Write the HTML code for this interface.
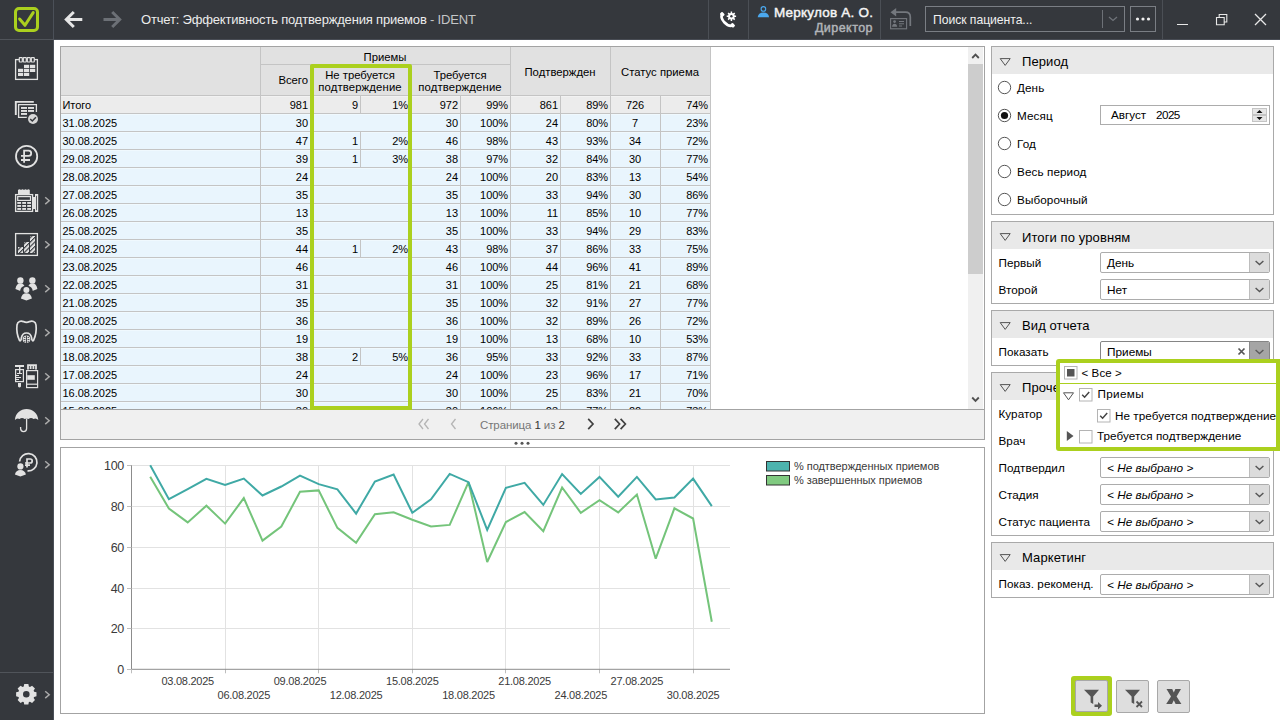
<!DOCTYPE html><html><head><meta charset="utf-8"><title>IDENT</title><style>
*{box-sizing:border-box;margin:0;padding:0}
html,body{width:1280px;height:720px;overflow:hidden}
body{position:relative;background:#fff;font-family:"Liberation Sans",sans-serif;font-size:12px;color:#111}
.a{position:absolute}
.t{position:absolute;white-space:nowrap;line-height:1}
</style></head><body>
<div class="a" style="left:0;top:0;width:54px;height:720px;background:#35383d"></div>
<div class="a" style="left:54px;top:0;width:1226px;height:40px;background:#35383d"></div>
<div class="a" style="left:53px;top:0;width:1px;height:720px;background:#4b5058"></div>
<div class="a" style="left:0;top:39px;width:54px;height:1px;background:#50545a"></div>
<div class="a" style="left:14px;top:7px;width:25px;height:25px;border:3px solid #abd01e;border-radius:5px"></div>
<svg class="a" style="left:14px;top:7px" width="25" height="25"><path d="M5.6 12 L11 18.3 L19.2 5.6" fill="none" stroke="#abd01e" stroke-width="3" stroke-linecap="round" stroke-linejoin="round"/></svg>
<svg class="a" style="left:0;top:0" width="54" height="720"><rect x="15.6" y="59.6" width="21.8" height="19.8" fill="none" stroke="#e2e2e2" stroke-width="1.3"/><rect x="19.3" y="57.6" width="3" height="4.4" rx="0.5" fill="#35383d" stroke="#e2e2e2" stroke-width="1.2"/><rect x="23.3" y="57.6" width="3" height="4.4" rx="0.5" fill="#35383d" stroke="#e2e2e2" stroke-width="1.2"/><rect x="27.3" y="57.6" width="3" height="4.4" rx="0.5" fill="#35383d" stroke="#e2e2e2" stroke-width="1.2"/><rect x="31.3" y="57.6" width="3" height="4.4" rx="0.5" fill="#35383d" stroke="#e2e2e2" stroke-width="1.2"/><rect x="24" y="64.8" width="5.2" height="3.2" fill="#e2e2e2"/><rect x="30" y="64.8" width="5.2" height="3.2" fill="#e2e2e2"/><rect x="18" y="68.8" width="5.2" height="3.2" fill="#e2e2e2"/><rect x="24" y="68.8" width="5.2" height="3.2" fill="#e2e2e2"/><rect x="30" y="68.8" width="5.2" height="3.2" fill="#e2e2e2"/><rect x="18" y="72.8" width="5.2" height="3.2" fill="#e2e2e2"/><rect x="24" y="72.8" width="5.2" height="3.2" fill="#e2e2e2"/><path d="M15.8 115 V101.9 H33.8" fill="none" stroke="#e2e2e2" stroke-width="1.9"/><path d="M29.5 117.4 H18.6 V104.6 H36.4 V112" fill="none" stroke="#e2e2e2" stroke-width="1.3"/><rect x="21" y="107" width="6" height="1.9" fill="#e2e2e2"/><rect x="28" y="107" width="6" height="1.9" fill="#e2e2e2"/><rect x="21" y="110" width="6" height="1.9" fill="#e2e2e2"/><rect x="28" y="110" width="6" height="1.9" fill="#e2e2e2"/><rect x="21" y="113" width="6" height="1.9" fill="#e2e2e2"/><circle cx="33" cy="119" r="6.3" fill="#35383d"/><circle cx="33" cy="119" r="5" fill="#d6d6d6"/><path d="M30.2 119 L32.3 121 L35.9 117.2" fill="none" stroke="#35383d" stroke-width="1.5"/><circle cx="26.6" cy="156.4" r="10.6" fill="none" stroke="#e2e2e2" stroke-width="1.8"/><path d="M24.1 162.7 V150.6 H28.6 A2.6 2.6 0 0 1 28.6 155.8 H21 M21 160 H30" fill="none" stroke="#e2e2e2" stroke-width="1.8"/><path d="M18 194 V190 Q19.5 188.6 21 190 Q22.5 188.6 24 190 Q25.5 188.6 27 190 Q28.5 188.6 29.8 190 V194 Z" fill="#e2e2e2"/><rect x="15.6" y="194.6" width="17" height="16.8" fill="none" stroke="#e2e2e2" stroke-width="1.3"/><rect x="17.7" y="196.6" width="12.8" height="3.8" fill="none" stroke="#e2e2e2" stroke-width="1.2"/><rect x="17.3" y="202" width="3.8" height="1.9" fill="#e2e2e2"/><rect x="22.2" y="202" width="3.8" height="1.9" fill="#e2e2e2"/><rect x="27.2" y="202" width="3.8" height="1.9" fill="#e2e2e2"/><rect x="17.3" y="205" width="3.8" height="1.9" fill="#e2e2e2"/><rect x="22.2" y="205" width="3.8" height="1.9" fill="#e2e2e2"/><rect x="27.2" y="205" width="3.8" height="1.9" fill="#e2e2e2"/><rect x="17.3" y="208" width="3.8" height="1.9" fill="#e2e2e2"/><rect x="22.2" y="208" width="3.8" height="1.9" fill="#e2e2e2"/><rect x="27.2" y="208" width="3.8" height="1.9" fill="#e2e2e2"/><rect x="33" y="197" width="2.6" height="12" fill="#e2e2e2"/><rect x="35.6" y="194.6" width="2" height="16.8" fill="none" stroke="#e2e2e2" stroke-width="1.2"/><rect x="15.6" y="233.6" width="21.8" height="21.8" fill="none" stroke="#e2e2e2" stroke-width="1.3"/><defs><pattern id="hb" patternUnits="userSpaceOnUse" width="3.2" height="3.2" patternTransform="rotate(45)"><rect width="3.2" height="3.2" fill="#e2e2e2"/><rect width="1.1" height="3.2" fill="#35383d"/></pattern></defs><rect x="18" y="247" width="5" height="6" fill="url(#hb)"/><rect x="24" y="242" width="5" height="11" fill="url(#hb)"/><rect x="30" y="236" width="5" height="17" fill="url(#hb)"/><circle cx="20.4" cy="280.4" r="3.2" fill="#e2e2e2"/><path d="M15.399999999999999 289 Q16.4 283.2 20.4 283.2 Q24.4 283.2 25.4 289 L20.4 291 Z" fill="#e2e2e2"/><circle cx="32.4" cy="280.4" r="3.2" fill="#e2e2e2"/><path d="M27.4 289 Q28.4 283.2 32.4 283.2 Q36.4 283.2 37.4 289 L32.4 291 Z" fill="#e2e2e2"/><circle cx="26.4" cy="292" r="6.6" fill="#35383d"/><circle cx="26.4" cy="289.9" r="3.0" fill="#e2e2e2"/><path d="M20.9 298.5 Q21.9 293.2 26.4 293.2 Q30.9 293.2 31.9 298.5 L26.4 300.5 Z" fill="#e2e2e2"/><path d="M19.5 340.5 C17 335 16.5 329 17 325 C17.6 321 21 320.6 23.5 321.6 C25.5 322.6 27.5 322.6 29.5 321.6 C32 320.6 35.6 321 36 325 C36.5 329 36 335 33.5 340.5 C32.5 341.5 31.8 340 31.6 338 C31 334 29 333 26.5 333 C24 333 22 334 21.4 338 C21.2 340 20.5 341.5 19.5 340.5 Z" fill="none" stroke="#e2e2e2" stroke-width="1.7"/><circle cx="26.5" cy="339.2" r="3.8" fill="#e2e2e2"/><path d="M26.5 335.6 V343 M24 337.4 H25.4 M27.6 337.4 H29 M23.6 339.6 H25.4 M27.6 339.6 H29.4 M24 341.8 H25.4 M27.6 341.8 H29" stroke="#35383d" stroke-width="0.9"/><rect x="15" y="365" width="9" height="2" fill="#e2e2e2"/><rect x="19" y="367" width="1.4" height="6" fill="#e2e2e2"/><rect x="15.6" y="369.6" width="7.8" height="12" fill="none" stroke="#e2e2e2" stroke-width="1.2"/><path d="M17 373.5 H22 M16 375.5 H19 M16 377.5 H21 M16 379.5 H19" stroke="#e2e2e2" stroke-width="1"/><path d="M18 383 H21 V386.5 Q19.5 388.5 18 386.5 Z" fill="#e2e2e2"/><path d="M28 369.5 V365.2 H36 V369.5 M30.6 365.6 V369 M33.4 365.6 V369" fill="none" stroke="#e2e2e2" stroke-width="1.8"/><rect x="26.6" y="370.6" width="11" height="17" fill="none" stroke="#e2e2e2" stroke-width="1.2"/><rect x="27.2" y="375.2" width="7.6" height="4.6" fill="#e2e2e2"/><path d="M26.6 384.2 H37.6" stroke="#e2e2e2" stroke-width="1.2"/><path d="M14.9 420 C15.5 413 20.5 409 26.6 409 C32.7 409 37.7 413 38.3 420 Q36 417.5 33.5 419 Q31 417 28.5 419 Q26.6 417.8 24.6 419 Q22 417 19.5 419 Q17 417.5 14.9 420 Z" fill="#e2e2e2"/><path d="M26.6 418.5 V428.6 A3 3 0 0 1 20.6 428.6 V427" fill="none" stroke="#e2e2e2" stroke-width="1.3"/><path d="M19.6 461.5 A8.7 8.7 0 1 1 27.5 470.9" fill="none" stroke="#e2e2e2" stroke-width="1.7"/><path d="M27 467.5 V459 H30.2 A2 2 0 0 1 30.2 463 H25 M25 465.2 H30" fill="none" stroke="#e2e2e2" stroke-width="1.7"/><circle cx="20.4" cy="466.4" r="3.1" fill="#e2e2e2"/><path d="M14.899999999999999 474.5 Q15.899999999999999 470 20.4 470 Q24.9 470 25.9 474.5 L20.4 476.5 Z" fill="#e2e2e2"/><path d="M45.2 197.29999999999998 L49.2 200.7 L45.2 204.1" fill="none" stroke="#a9a9a9" stroke-width="1.5"/><path d="M45.2 241.29999999999998 L49.2 244.7 L45.2 248.1" fill="none" stroke="#a9a9a9" stroke-width="1.5"/><path d="M45.2 285.3 L49.2 288.7 L45.2 292.09999999999997" fill="none" stroke="#a9a9a9" stroke-width="1.5"/><path d="M45.2 329.3 L49.2 332.7 L45.2 336.09999999999997" fill="none" stroke="#a9a9a9" stroke-width="1.5"/><path d="M45.2 373.3 L49.2 376.7 L45.2 380.09999999999997" fill="none" stroke="#a9a9a9" stroke-width="1.5"/><path d="M45.2 417.3 L49.2 420.7 L45.2 424.09999999999997" fill="none" stroke="#a9a9a9" stroke-width="1.5"/><path d="M45.2 461.3 L49.2 464.7 L45.2 468.09999999999997" fill="none" stroke="#a9a9a9" stroke-width="1.5"/><path d="M45.2 691.3000000000001 L49.2 694.7 L45.2 698.1" fill="none" stroke="#a9a9a9" stroke-width="1.5"/><rect x="0" y="672" width="53" height="1" fill="#50545a"/><path d="M24.23 684.11 L28.37 684.11 L28.88 686.52 L29.98 686.97 L32.05 685.63 L34.97 688.55 L33.63 690.62 L34.08 691.72 L36.49 692.23 L36.49 696.37 L34.08 696.88 L33.63 697.98 L34.97 700.05 L32.05 702.97 L29.98 701.63 L28.88 702.08 L28.37 704.49 L24.23 704.49 L23.72 702.08 L22.62 701.63 L20.55 702.97 L17.63 700.05 L18.97 697.98 L18.52 696.88 L16.11 696.37 L16.11 692.23 L18.52 691.72 L18.97 690.62 L17.63 688.55 L20.55 685.63 L22.62 686.97 L23.72 686.52 Z M29.6 694.3 A3.3 3.3 0 1 0 23.0 694.3 A3.3 3.3 0 1 0 29.6 694.3 Z" fill="#e2e2e2" fill-rule="evenodd"/></svg>
<svg class="a" style="left:60px;top:6px" width="70" height="28"><path d="M6.5 13.5 H22.3 M13.8 6 L6.3 13.5 L13.8 21" fill="none" stroke="#e6e6e6" stroke-width="3" stroke-linejoin="miter"/><path d="M43.5 13.5 H59.5 M52.2 6 L59.7 13.5 L52.2 21" fill="none" stroke="#6c7076" stroke-width="3"/></svg>
<div class="t" style="left:141px;top:13px;font-size:13px;color:#ececec;letter-spacing:-0.18px">Отчет: Эффективность подтверждения приемов<span style="color:#c4c6c8"> - IDENT</span></div>
<div class="a" style="left:708px;top:0;width:1px;height:40px;background:#4b4f55"></div>
<div class="a" style="left:748px;top:0;width:1px;height:40px;background:#4b4f55"></div>
<div class="a" style="left:880px;top:0;width:1px;height:40px;background:#4b4f55"></div>
<div class="a" style="left:1162px;top:0;width:1px;height:40px;background:#4b4f55"></div>
<svg class="a" style="left:716px;top:8px" width="26" height="24"><path d="M6.2 6.2 Q4.2 9.6 8 14 Q12.4 18.8 16.6 17.6" fill="none" stroke="#fff" stroke-width="2.6" stroke-linecap="round"/><rect x="4.2" y="4.6" width="4.2" height="3.4" rx="1" transform="rotate(45 6.3 6.3)" fill="#fff"/><rect x="14.6" y="15.6" width="4.2" height="3.4" rx="1" transform="rotate(45 16.7 17.3)" fill="#fff"/><circle cx="15.4" cy="8.3" r="3.3" fill="#fff"/><path d="M15.4 3.6 V13 M10.7 8.3 H20.1 M12.1 5 L18.7 11.6 M18.7 5 L12.1 11.6" stroke="#fff" stroke-width="1.5"/><circle cx="15.4" cy="8.3" r="1.2" fill="#35383d"/></svg>
<svg class="a" style="left:755px;top:4px" width="17" height="16"><circle cx="8.4" cy="4.9" r="2.3" fill="none" stroke="#4ba8ee" stroke-width="1.1"/><path d="M2.7 13.2 Q3.2 8.6 8.4 8.4 Q13.6 8.6 14.1 13.2 Z" fill="#4ba8ee"/></svg>
<div class="t" style="left:774px;top:6px;width:99px;text-align:right;font-size:13.5px;color:#f4f4f4;-webkit-text-stroke:0.45px #f4f4f4;letter-spacing:0.22px">Меркулов А. О.</div>
<div class="t" style="left:773px;top:22px;width:100px;text-align:right;font-size:12.5px;color:#b1b4b8;-webkit-text-stroke:0.45px #b1b4b8;letter-spacing:0.45px">Директор</div>
<svg class="a" style="left:886px;top:6px" width="28" height="26"><path d="M9 6.2 H19.5 Q24.3 6.2 24.3 11 V20" fill="none" stroke="#74787e" stroke-width="1.7"/><path d="M4.5 6.2 L10.2 2 V10.4 Z" fill="#74787e"/><rect x="4.6" y="12.6" width="16" height="10.2" fill="none" stroke="#74787e" stroke-width="1.1"/><circle cx="8.6" cy="15.6" r="1.4" fill="#74787e"/><path d="M6 20.8 Q6.4 17.8 8.6 17.8 Q10.8 17.8 11.2 20.8 Z" fill="#74787e"/><path d="M13 15.5 H18 M13 17.8 H18 M13 20 H16" stroke="#74787e" stroke-width="1"/></svg>
<div class="a" style="left:925px;top:6px;width:200px;height:26px;border:1px solid #7a7e84"></div>
<div class="t" style="left:933px;top:14px;font-size:12.2px;color:#f0f0f0;letter-spacing:-0.05px">Поиск пациента...</div>
<div class="a" style="left:1102px;top:10px;width:1px;height:18px;background:#6d7177"></div>
<svg class="a" style="left:1107px;top:14px" width="12" height="10"><path d="M2 3 L6 6.5 L10 3" fill="none" stroke="#6f7379" stroke-width="1.3"/></svg>
<div class="a" style="left:1130px;top:6px;width:26px;height:26px;border:1px solid #7a7e84"></div>
<svg class="a" style="left:1130px;top:6px" width="26" height="26"><circle cx="7.5" cy="13" r="1.6" fill="#f0f0f0"/><circle cx="13" cy="13" r="1.6" fill="#f0f0f0"/><circle cx="18.5" cy="13" r="1.6" fill="#f0f0f0"/></svg>
<div class="a" style="left:1177px;top:24px;width:11px;height:1px;background:#e8e8e8"></div>
<svg class="a" style="left:1210px;top:8px" width="22" height="22"><path d="M6.5 9.5 H14.2 V16.8 H6.5 Z M9.2 9.2 V6.5 H16.8 V14 H14.4" fill="none" stroke="#e8e8e8" stroke-width="1.1"/></svg>
<svg class="a" style="left:1250px;top:8px" width="22" height="22"><path d="M5 6 L16 17 M16 6 L5 17" fill="none" stroke="#e8e8e8" stroke-width="1.3"/></svg>
<div class="a" style="left:54px;top:39px;width:1226px;height:1px;background:#484c54"></div>
<div class="a" style="left:60px;top:46px;width:925px;height:394px;border:1px solid #a3a3a3;background:#fff"></div>
<div class="a" style="left:61px;top:47px;width:649px;height:48px;background:#e1e1e1"></div>
<div class="a" style="left:61px;top:96px;width:649px;height:17px;background:#ececec"></div>
<div class="a" style="left:61px;top:113px;width:649px;height:296px;background:#e9f5fd"></div>
<div class="a" style="left:260px;top:64px;width:250px;height:1px;background:#c4c4c4"></div>
<div class="a" style="left:61px;top:95px;width:649px;height:1px;background:#c4c4c4"></div>
<div class="a" style="left:61px;top:113px;width:649px;height:1px;background:#c4c4c4"></div>
<div class="a" style="left:61px;top:114px;width:649px;height:1px;background:#f0f9fe"></div>
<div class="a" style="left:61px;top:131px;width:649px;height:1px;background:#c4c4c4"></div>
<div class="a" style="left:61px;top:132px;width:649px;height:1px;background:#f0f9fe"></div>
<div class="a" style="left:61px;top:149px;width:649px;height:1px;background:#c4c4c4"></div>
<div class="a" style="left:61px;top:150px;width:649px;height:1px;background:#f0f9fe"></div>
<div class="a" style="left:61px;top:167px;width:649px;height:1px;background:#c4c4c4"></div>
<div class="a" style="left:61px;top:168px;width:649px;height:1px;background:#f0f9fe"></div>
<div class="a" style="left:61px;top:185px;width:649px;height:1px;background:#c4c4c4"></div>
<div class="a" style="left:61px;top:186px;width:649px;height:1px;background:#f0f9fe"></div>
<div class="a" style="left:61px;top:203px;width:649px;height:1px;background:#c4c4c4"></div>
<div class="a" style="left:61px;top:204px;width:649px;height:1px;background:#f0f9fe"></div>
<div class="a" style="left:61px;top:221px;width:649px;height:1px;background:#c4c4c4"></div>
<div class="a" style="left:61px;top:222px;width:649px;height:1px;background:#f0f9fe"></div>
<div class="a" style="left:61px;top:239px;width:649px;height:1px;background:#c4c4c4"></div>
<div class="a" style="left:61px;top:240px;width:649px;height:1px;background:#f0f9fe"></div>
<div class="a" style="left:61px;top:257px;width:649px;height:1px;background:#c4c4c4"></div>
<div class="a" style="left:61px;top:258px;width:649px;height:1px;background:#f0f9fe"></div>
<div class="a" style="left:61px;top:275px;width:649px;height:1px;background:#c4c4c4"></div>
<div class="a" style="left:61px;top:276px;width:649px;height:1px;background:#f0f9fe"></div>
<div class="a" style="left:61px;top:293px;width:649px;height:1px;background:#c4c4c4"></div>
<div class="a" style="left:61px;top:294px;width:649px;height:1px;background:#f0f9fe"></div>
<div class="a" style="left:61px;top:311px;width:649px;height:1px;background:#c4c4c4"></div>
<div class="a" style="left:61px;top:312px;width:649px;height:1px;background:#f0f9fe"></div>
<div class="a" style="left:61px;top:329px;width:649px;height:1px;background:#c4c4c4"></div>
<div class="a" style="left:61px;top:330px;width:649px;height:1px;background:#f0f9fe"></div>
<div class="a" style="left:61px;top:347px;width:649px;height:1px;background:#c4c4c4"></div>
<div class="a" style="left:61px;top:348px;width:649px;height:1px;background:#f0f9fe"></div>
<div class="a" style="left:61px;top:365px;width:649px;height:1px;background:#c4c4c4"></div>
<div class="a" style="left:61px;top:366px;width:649px;height:1px;background:#f0f9fe"></div>
<div class="a" style="left:61px;top:383px;width:649px;height:1px;background:#c4c4c4"></div>
<div class="a" style="left:61px;top:384px;width:649px;height:1px;background:#f0f9fe"></div>
<div class="a" style="left:61px;top:401px;width:649px;height:1px;background:#c4c4c4"></div>
<div class="a" style="left:61px;top:402px;width:649px;height:1px;background:#f0f9fe"></div>
<div class="a" style="left:61px;top:96px;width:649px;height:1px;background:#f2f2f2"></div>
<div class="a" style="left:260px;top:47px;width:1px;height:362px;background:#c4c4c4"></div>
<div class="a" style="left:310px;top:64px;width:1px;height:345px;background:#c4c4c4"></div>
<div class="a" style="left:410px;top:64px;width:1px;height:345px;background:#c4c4c4"></div>
<div class="a" style="left:510px;top:47px;width:1px;height:362px;background:#c4c4c4"></div>
<div class="a" style="left:610px;top:47px;width:1px;height:362px;background:#c4c4c4"></div>
<div class="a" style="left:460px;top:95px;width:1px;height:314px;background:#c4c4c4"></div>
<div class="a" style="left:560px;top:95px;width:1px;height:314px;background:#c4c4c4"></div>
<div class="a" style="left:660px;top:95px;width:1px;height:314px;background:#c4c4c4"></div>
<div class="a" style="left:710px;top:47px;width:1px;height:362px;background:#c4c4c4"></div>
<div class="a" style="left:360px;top:95px;width:1px;height:18px;background:#c4c4c4"></div>
<div class="a" style="left:360px;top:131px;width:1px;height:18px;background:#c4c4c4"></div>
<div class="a" style="left:360px;top:149px;width:1px;height:18px;background:#c4c4c4"></div>
<div class="a" style="left:360px;top:239px;width:1px;height:18px;background:#c4c4c4"></div>
<div class="a" style="left:360px;top:347px;width:1px;height:18px;background:#c4c4c4"></div>
<div class="t" style="top:52px;font-size:11.3px;color:#000;left:260px;width:250px;text-align:center;">Приемы</div>
<div class="t" style="top:75px;font-size:11.3px;color:#000;left:260px;width:48px;text-align:right;">Всего</div>
<div class="t" style="top:70px;font-size:11.3px;color:#000;left:310px;width:100px;text-align:center;">Не требуется</div>
<div class="t" style="top:82px;font-size:11.3px;color:#000;letter-spacing:0.15px;left:310px;width:100px;text-align:center;">подтверждение</div>
<div class="t" style="top:70px;font-size:11.3px;color:#000;left:410px;width:100px;text-align:center;">Требуется</div>
<div class="t" style="top:82px;font-size:11.3px;color:#000;letter-spacing:0.15px;left:410px;width:100px;text-align:center;">подтверждение</div>
<div class="t" style="top:67px;font-size:11.3px;color:#000;left:510px;width:100px;text-align:center;">Подтвержден</div>
<div class="t" style="top:67px;font-size:11.3px;color:#000;left:610px;width:100px;text-align:center;">Статус приема</div>
<div class="t" style="top:100px;font-size:11px;color:#000;letter-spacing:-0.05px;left:62.5px;">Итого</div>
<div class="t" style="top:100px;font-size:11px;color:#000;letter-spacing:-0.05px;left:260px;width:48px;text-align:right;">981</div>
<div class="t" style="top:100px;font-size:11px;color:#000;letter-spacing:-0.05px;left:310px;width:48px;text-align:right;">9</div>
<div class="t" style="top:100px;font-size:11px;color:#000;letter-spacing:-0.05px;left:360px;width:48px;text-align:right;">1%</div>
<div class="t" style="top:100px;font-size:11px;color:#000;letter-spacing:-0.05px;left:410px;width:48px;text-align:right;">972</div>
<div class="t" style="top:100px;font-size:11px;color:#000;letter-spacing:-0.05px;left:460px;width:48px;text-align:right;">99%</div>
<div class="t" style="top:100px;font-size:11px;color:#000;letter-spacing:-0.05px;left:510px;width:48px;text-align:right;">861</div>
<div class="t" style="top:100px;font-size:11px;color:#000;letter-spacing:-0.05px;left:560px;width:48px;text-align:right;">89%</div>
<div class="t" style="top:100px;font-size:11px;color:#000;letter-spacing:-0.05px;left:610px;width:50px;text-align:center;">726</div>
<div class="t" style="top:100px;font-size:11px;color:#000;letter-spacing:-0.05px;left:660px;width:48px;text-align:right;">74%</div>
<div class="t" style="top:118px;font-size:11px;color:#000;letter-spacing:-0.05px;left:62.5px;">31.08.2025</div>
<div class="t" style="top:118px;font-size:11px;color:#000;letter-spacing:-0.05px;left:260px;width:48px;text-align:right;">30</div>
<div class="t" style="top:118px;font-size:11px;color:#000;letter-spacing:-0.05px;left:410px;width:48px;text-align:right;">30</div>
<div class="t" style="top:118px;font-size:11px;color:#000;letter-spacing:-0.05px;left:460px;width:48px;text-align:right;">100%</div>
<div class="t" style="top:118px;font-size:11px;color:#000;letter-spacing:-0.05px;left:510px;width:48px;text-align:right;">24</div>
<div class="t" style="top:118px;font-size:11px;color:#000;letter-spacing:-0.05px;left:560px;width:48px;text-align:right;">80%</div>
<div class="t" style="top:118px;font-size:11px;color:#000;letter-spacing:-0.05px;left:610px;width:50px;text-align:center;">7</div>
<div class="t" style="top:118px;font-size:11px;color:#000;letter-spacing:-0.05px;left:660px;width:48px;text-align:right;">23%</div>
<div class="t" style="top:136px;font-size:11px;color:#000;letter-spacing:-0.05px;left:62.5px;">30.08.2025</div>
<div class="t" style="top:136px;font-size:11px;color:#000;letter-spacing:-0.05px;left:260px;width:48px;text-align:right;">47</div>
<div class="t" style="top:136px;font-size:11px;color:#000;letter-spacing:-0.05px;left:310px;width:48px;text-align:right;">1</div>
<div class="t" style="top:136px;font-size:11px;color:#000;letter-spacing:-0.05px;left:360px;width:48px;text-align:right;">2%</div>
<div class="t" style="top:136px;font-size:11px;color:#000;letter-spacing:-0.05px;left:410px;width:48px;text-align:right;">46</div>
<div class="t" style="top:136px;font-size:11px;color:#000;letter-spacing:-0.05px;left:460px;width:48px;text-align:right;">98%</div>
<div class="t" style="top:136px;font-size:11px;color:#000;letter-spacing:-0.05px;left:510px;width:48px;text-align:right;">43</div>
<div class="t" style="top:136px;font-size:11px;color:#000;letter-spacing:-0.05px;left:560px;width:48px;text-align:right;">93%</div>
<div class="t" style="top:136px;font-size:11px;color:#000;letter-spacing:-0.05px;left:610px;width:50px;text-align:center;">34</div>
<div class="t" style="top:136px;font-size:11px;color:#000;letter-spacing:-0.05px;left:660px;width:48px;text-align:right;">72%</div>
<div class="t" style="top:154px;font-size:11px;color:#000;letter-spacing:-0.05px;left:62.5px;">29.08.2025</div>
<div class="t" style="top:154px;font-size:11px;color:#000;letter-spacing:-0.05px;left:260px;width:48px;text-align:right;">39</div>
<div class="t" style="top:154px;font-size:11px;color:#000;letter-spacing:-0.05px;left:310px;width:48px;text-align:right;">1</div>
<div class="t" style="top:154px;font-size:11px;color:#000;letter-spacing:-0.05px;left:360px;width:48px;text-align:right;">3%</div>
<div class="t" style="top:154px;font-size:11px;color:#000;letter-spacing:-0.05px;left:410px;width:48px;text-align:right;">38</div>
<div class="t" style="top:154px;font-size:11px;color:#000;letter-spacing:-0.05px;left:460px;width:48px;text-align:right;">97%</div>
<div class="t" style="top:154px;font-size:11px;color:#000;letter-spacing:-0.05px;left:510px;width:48px;text-align:right;">32</div>
<div class="t" style="top:154px;font-size:11px;color:#000;letter-spacing:-0.05px;left:560px;width:48px;text-align:right;">84%</div>
<div class="t" style="top:154px;font-size:11px;color:#000;letter-spacing:-0.05px;left:610px;width:50px;text-align:center;">30</div>
<div class="t" style="top:154px;font-size:11px;color:#000;letter-spacing:-0.05px;left:660px;width:48px;text-align:right;">77%</div>
<div class="t" style="top:172px;font-size:11px;color:#000;letter-spacing:-0.05px;left:62.5px;">28.08.2025</div>
<div class="t" style="top:172px;font-size:11px;color:#000;letter-spacing:-0.05px;left:260px;width:48px;text-align:right;">24</div>
<div class="t" style="top:172px;font-size:11px;color:#000;letter-spacing:-0.05px;left:410px;width:48px;text-align:right;">24</div>
<div class="t" style="top:172px;font-size:11px;color:#000;letter-spacing:-0.05px;left:460px;width:48px;text-align:right;">100%</div>
<div class="t" style="top:172px;font-size:11px;color:#000;letter-spacing:-0.05px;left:510px;width:48px;text-align:right;">20</div>
<div class="t" style="top:172px;font-size:11px;color:#000;letter-spacing:-0.05px;left:560px;width:48px;text-align:right;">83%</div>
<div class="t" style="top:172px;font-size:11px;color:#000;letter-spacing:-0.05px;left:610px;width:50px;text-align:center;">13</div>
<div class="t" style="top:172px;font-size:11px;color:#000;letter-spacing:-0.05px;left:660px;width:48px;text-align:right;">54%</div>
<div class="t" style="top:190px;font-size:11px;color:#000;letter-spacing:-0.05px;left:62.5px;">27.08.2025</div>
<div class="t" style="top:190px;font-size:11px;color:#000;letter-spacing:-0.05px;left:260px;width:48px;text-align:right;">35</div>
<div class="t" style="top:190px;font-size:11px;color:#000;letter-spacing:-0.05px;left:410px;width:48px;text-align:right;">35</div>
<div class="t" style="top:190px;font-size:11px;color:#000;letter-spacing:-0.05px;left:460px;width:48px;text-align:right;">100%</div>
<div class="t" style="top:190px;font-size:11px;color:#000;letter-spacing:-0.05px;left:510px;width:48px;text-align:right;">33</div>
<div class="t" style="top:190px;font-size:11px;color:#000;letter-spacing:-0.05px;left:560px;width:48px;text-align:right;">94%</div>
<div class="t" style="top:190px;font-size:11px;color:#000;letter-spacing:-0.05px;left:610px;width:50px;text-align:center;">30</div>
<div class="t" style="top:190px;font-size:11px;color:#000;letter-spacing:-0.05px;left:660px;width:48px;text-align:right;">86%</div>
<div class="t" style="top:208px;font-size:11px;color:#000;letter-spacing:-0.05px;left:62.5px;">26.08.2025</div>
<div class="t" style="top:208px;font-size:11px;color:#000;letter-spacing:-0.05px;left:260px;width:48px;text-align:right;">13</div>
<div class="t" style="top:208px;font-size:11px;color:#000;letter-spacing:-0.05px;left:410px;width:48px;text-align:right;">13</div>
<div class="t" style="top:208px;font-size:11px;color:#000;letter-spacing:-0.05px;left:460px;width:48px;text-align:right;">100%</div>
<div class="t" style="top:208px;font-size:11px;color:#000;letter-spacing:-0.05px;left:510px;width:48px;text-align:right;">11</div>
<div class="t" style="top:208px;font-size:11px;color:#000;letter-spacing:-0.05px;left:560px;width:48px;text-align:right;">85%</div>
<div class="t" style="top:208px;font-size:11px;color:#000;letter-spacing:-0.05px;left:610px;width:50px;text-align:center;">10</div>
<div class="t" style="top:208px;font-size:11px;color:#000;letter-spacing:-0.05px;left:660px;width:48px;text-align:right;">77%</div>
<div class="t" style="top:226px;font-size:11px;color:#000;letter-spacing:-0.05px;left:62.5px;">25.08.2025</div>
<div class="t" style="top:226px;font-size:11px;color:#000;letter-spacing:-0.05px;left:260px;width:48px;text-align:right;">35</div>
<div class="t" style="top:226px;font-size:11px;color:#000;letter-spacing:-0.05px;left:410px;width:48px;text-align:right;">35</div>
<div class="t" style="top:226px;font-size:11px;color:#000;letter-spacing:-0.05px;left:460px;width:48px;text-align:right;">100%</div>
<div class="t" style="top:226px;font-size:11px;color:#000;letter-spacing:-0.05px;left:510px;width:48px;text-align:right;">33</div>
<div class="t" style="top:226px;font-size:11px;color:#000;letter-spacing:-0.05px;left:560px;width:48px;text-align:right;">94%</div>
<div class="t" style="top:226px;font-size:11px;color:#000;letter-spacing:-0.05px;left:610px;width:50px;text-align:center;">29</div>
<div class="t" style="top:226px;font-size:11px;color:#000;letter-spacing:-0.05px;left:660px;width:48px;text-align:right;">83%</div>
<div class="t" style="top:244px;font-size:11px;color:#000;letter-spacing:-0.05px;left:62.5px;">24.08.2025</div>
<div class="t" style="top:244px;font-size:11px;color:#000;letter-spacing:-0.05px;left:260px;width:48px;text-align:right;">44</div>
<div class="t" style="top:244px;font-size:11px;color:#000;letter-spacing:-0.05px;left:310px;width:48px;text-align:right;">1</div>
<div class="t" style="top:244px;font-size:11px;color:#000;letter-spacing:-0.05px;left:360px;width:48px;text-align:right;">2%</div>
<div class="t" style="top:244px;font-size:11px;color:#000;letter-spacing:-0.05px;left:410px;width:48px;text-align:right;">43</div>
<div class="t" style="top:244px;font-size:11px;color:#000;letter-spacing:-0.05px;left:460px;width:48px;text-align:right;">98%</div>
<div class="t" style="top:244px;font-size:11px;color:#000;letter-spacing:-0.05px;left:510px;width:48px;text-align:right;">37</div>
<div class="t" style="top:244px;font-size:11px;color:#000;letter-spacing:-0.05px;left:560px;width:48px;text-align:right;">86%</div>
<div class="t" style="top:244px;font-size:11px;color:#000;letter-spacing:-0.05px;left:610px;width:50px;text-align:center;">33</div>
<div class="t" style="top:244px;font-size:11px;color:#000;letter-spacing:-0.05px;left:660px;width:48px;text-align:right;">75%</div>
<div class="t" style="top:262px;font-size:11px;color:#000;letter-spacing:-0.05px;left:62.5px;">23.08.2025</div>
<div class="t" style="top:262px;font-size:11px;color:#000;letter-spacing:-0.05px;left:260px;width:48px;text-align:right;">46</div>
<div class="t" style="top:262px;font-size:11px;color:#000;letter-spacing:-0.05px;left:410px;width:48px;text-align:right;">46</div>
<div class="t" style="top:262px;font-size:11px;color:#000;letter-spacing:-0.05px;left:460px;width:48px;text-align:right;">100%</div>
<div class="t" style="top:262px;font-size:11px;color:#000;letter-spacing:-0.05px;left:510px;width:48px;text-align:right;">44</div>
<div class="t" style="top:262px;font-size:11px;color:#000;letter-spacing:-0.05px;left:560px;width:48px;text-align:right;">96%</div>
<div class="t" style="top:262px;font-size:11px;color:#000;letter-spacing:-0.05px;left:610px;width:50px;text-align:center;">41</div>
<div class="t" style="top:262px;font-size:11px;color:#000;letter-spacing:-0.05px;left:660px;width:48px;text-align:right;">89%</div>
<div class="t" style="top:280px;font-size:11px;color:#000;letter-spacing:-0.05px;left:62.5px;">22.08.2025</div>
<div class="t" style="top:280px;font-size:11px;color:#000;letter-spacing:-0.05px;left:260px;width:48px;text-align:right;">31</div>
<div class="t" style="top:280px;font-size:11px;color:#000;letter-spacing:-0.05px;left:410px;width:48px;text-align:right;">31</div>
<div class="t" style="top:280px;font-size:11px;color:#000;letter-spacing:-0.05px;left:460px;width:48px;text-align:right;">100%</div>
<div class="t" style="top:280px;font-size:11px;color:#000;letter-spacing:-0.05px;left:510px;width:48px;text-align:right;">25</div>
<div class="t" style="top:280px;font-size:11px;color:#000;letter-spacing:-0.05px;left:560px;width:48px;text-align:right;">81%</div>
<div class="t" style="top:280px;font-size:11px;color:#000;letter-spacing:-0.05px;left:610px;width:50px;text-align:center;">21</div>
<div class="t" style="top:280px;font-size:11px;color:#000;letter-spacing:-0.05px;left:660px;width:48px;text-align:right;">68%</div>
<div class="t" style="top:298px;font-size:11px;color:#000;letter-spacing:-0.05px;left:62.5px;">21.08.2025</div>
<div class="t" style="top:298px;font-size:11px;color:#000;letter-spacing:-0.05px;left:260px;width:48px;text-align:right;">35</div>
<div class="t" style="top:298px;font-size:11px;color:#000;letter-spacing:-0.05px;left:410px;width:48px;text-align:right;">35</div>
<div class="t" style="top:298px;font-size:11px;color:#000;letter-spacing:-0.05px;left:460px;width:48px;text-align:right;">100%</div>
<div class="t" style="top:298px;font-size:11px;color:#000;letter-spacing:-0.05px;left:510px;width:48px;text-align:right;">32</div>
<div class="t" style="top:298px;font-size:11px;color:#000;letter-spacing:-0.05px;left:560px;width:48px;text-align:right;">91%</div>
<div class="t" style="top:298px;font-size:11px;color:#000;letter-spacing:-0.05px;left:610px;width:50px;text-align:center;">27</div>
<div class="t" style="top:298px;font-size:11px;color:#000;letter-spacing:-0.05px;left:660px;width:48px;text-align:right;">77%</div>
<div class="t" style="top:316px;font-size:11px;color:#000;letter-spacing:-0.05px;left:62.5px;">20.08.2025</div>
<div class="t" style="top:316px;font-size:11px;color:#000;letter-spacing:-0.05px;left:260px;width:48px;text-align:right;">36</div>
<div class="t" style="top:316px;font-size:11px;color:#000;letter-spacing:-0.05px;left:410px;width:48px;text-align:right;">36</div>
<div class="t" style="top:316px;font-size:11px;color:#000;letter-spacing:-0.05px;left:460px;width:48px;text-align:right;">100%</div>
<div class="t" style="top:316px;font-size:11px;color:#000;letter-spacing:-0.05px;left:510px;width:48px;text-align:right;">32</div>
<div class="t" style="top:316px;font-size:11px;color:#000;letter-spacing:-0.05px;left:560px;width:48px;text-align:right;">89%</div>
<div class="t" style="top:316px;font-size:11px;color:#000;letter-spacing:-0.05px;left:610px;width:50px;text-align:center;">26</div>
<div class="t" style="top:316px;font-size:11px;color:#000;letter-spacing:-0.05px;left:660px;width:48px;text-align:right;">72%</div>
<div class="t" style="top:334px;font-size:11px;color:#000;letter-spacing:-0.05px;left:62.5px;">19.08.2025</div>
<div class="t" style="top:334px;font-size:11px;color:#000;letter-spacing:-0.05px;left:260px;width:48px;text-align:right;">19</div>
<div class="t" style="top:334px;font-size:11px;color:#000;letter-spacing:-0.05px;left:410px;width:48px;text-align:right;">19</div>
<div class="t" style="top:334px;font-size:11px;color:#000;letter-spacing:-0.05px;left:460px;width:48px;text-align:right;">100%</div>
<div class="t" style="top:334px;font-size:11px;color:#000;letter-spacing:-0.05px;left:510px;width:48px;text-align:right;">13</div>
<div class="t" style="top:334px;font-size:11px;color:#000;letter-spacing:-0.05px;left:560px;width:48px;text-align:right;">68%</div>
<div class="t" style="top:334px;font-size:11px;color:#000;letter-spacing:-0.05px;left:610px;width:50px;text-align:center;">10</div>
<div class="t" style="top:334px;font-size:11px;color:#000;letter-spacing:-0.05px;left:660px;width:48px;text-align:right;">53%</div>
<div class="t" style="top:352px;font-size:11px;color:#000;letter-spacing:-0.05px;left:62.5px;">18.08.2025</div>
<div class="t" style="top:352px;font-size:11px;color:#000;letter-spacing:-0.05px;left:260px;width:48px;text-align:right;">38</div>
<div class="t" style="top:352px;font-size:11px;color:#000;letter-spacing:-0.05px;left:310px;width:48px;text-align:right;">2</div>
<div class="t" style="top:352px;font-size:11px;color:#000;letter-spacing:-0.05px;left:360px;width:48px;text-align:right;">5%</div>
<div class="t" style="top:352px;font-size:11px;color:#000;letter-spacing:-0.05px;left:410px;width:48px;text-align:right;">36</div>
<div class="t" style="top:352px;font-size:11px;color:#000;letter-spacing:-0.05px;left:460px;width:48px;text-align:right;">95%</div>
<div class="t" style="top:352px;font-size:11px;color:#000;letter-spacing:-0.05px;left:510px;width:48px;text-align:right;">33</div>
<div class="t" style="top:352px;font-size:11px;color:#000;letter-spacing:-0.05px;left:560px;width:48px;text-align:right;">92%</div>
<div class="t" style="top:352px;font-size:11px;color:#000;letter-spacing:-0.05px;left:610px;width:50px;text-align:center;">33</div>
<div class="t" style="top:352px;font-size:11px;color:#000;letter-spacing:-0.05px;left:660px;width:48px;text-align:right;">87%</div>
<div class="t" style="top:370px;font-size:11px;color:#000;letter-spacing:-0.05px;left:62.5px;">17.08.2025</div>
<div class="t" style="top:370px;font-size:11px;color:#000;letter-spacing:-0.05px;left:260px;width:48px;text-align:right;">24</div>
<div class="t" style="top:370px;font-size:11px;color:#000;letter-spacing:-0.05px;left:410px;width:48px;text-align:right;">24</div>
<div class="t" style="top:370px;font-size:11px;color:#000;letter-spacing:-0.05px;left:460px;width:48px;text-align:right;">100%</div>
<div class="t" style="top:370px;font-size:11px;color:#000;letter-spacing:-0.05px;left:510px;width:48px;text-align:right;">23</div>
<div class="t" style="top:370px;font-size:11px;color:#000;letter-spacing:-0.05px;left:560px;width:48px;text-align:right;">96%</div>
<div class="t" style="top:370px;font-size:11px;color:#000;letter-spacing:-0.05px;left:610px;width:50px;text-align:center;">17</div>
<div class="t" style="top:370px;font-size:11px;color:#000;letter-spacing:-0.05px;left:660px;width:48px;text-align:right;">71%</div>
<div class="t" style="top:388px;font-size:11px;color:#000;letter-spacing:-0.05px;left:62.5px;">16.08.2025</div>
<div class="t" style="top:388px;font-size:11px;color:#000;letter-spacing:-0.05px;left:260px;width:48px;text-align:right;">30</div>
<div class="t" style="top:388px;font-size:11px;color:#000;letter-spacing:-0.05px;left:410px;width:48px;text-align:right;">30</div>
<div class="t" style="top:388px;font-size:11px;color:#000;letter-spacing:-0.05px;left:460px;width:48px;text-align:right;">100%</div>
<div class="t" style="top:388px;font-size:11px;color:#000;letter-spacing:-0.05px;left:510px;width:48px;text-align:right;">25</div>
<div class="t" style="top:388px;font-size:11px;color:#000;letter-spacing:-0.05px;left:560px;width:48px;text-align:right;">83%</div>
<div class="t" style="top:388px;font-size:11px;color:#000;letter-spacing:-0.05px;left:610px;width:50px;text-align:center;">21</div>
<div class="t" style="top:388px;font-size:11px;color:#000;letter-spacing:-0.05px;left:660px;width:48px;text-align:right;">70%</div>
<div class="t" style="top:406px;font-size:11px;color:#000;letter-spacing:-0.05px;left:62.5px;">15.08.2025</div>
<div class="t" style="top:406px;font-size:11px;color:#000;letter-spacing:-0.05px;left:260px;width:48px;text-align:right;">30</div>
<div class="t" style="top:406px;font-size:11px;color:#000;letter-spacing:-0.05px;left:410px;width:48px;text-align:right;">30</div>
<div class="t" style="top:406px;font-size:11px;color:#000;letter-spacing:-0.05px;left:460px;width:48px;text-align:right;">100%</div>
<div class="t" style="top:406px;font-size:11px;color:#000;letter-spacing:-0.05px;left:510px;width:48px;text-align:right;">23</div>
<div class="t" style="top:406px;font-size:11px;color:#000;letter-spacing:-0.05px;left:560px;width:48px;text-align:right;">77%</div>
<div class="t" style="top:406px;font-size:11px;color:#000;letter-spacing:-0.05px;left:610px;width:50px;text-align:center;">22</div>
<div class="t" style="top:406px;font-size:11px;color:#000;letter-spacing:-0.05px;left:660px;width:48px;text-align:right;">73%</div>
<div class="a" style="left:61px;top:409px;width:923px;height:1px;background:#a3a3a3"></div>
<div class="a" style="left:310px;top:64px;width:102px;height:346px;border:4px solid #abd01e;border-radius:2px 2px 0 0"></div>
<div class="a" style="left:968px;top:47px;width:15px;height:362px;background:#f0f0f0"></div>
<div class="a" style="left:968px;top:64px;width:15px;height:210px;background:#cdcdcd"></div>
<svg class="a" style="left:968px;top:47px" width="15" height="362"><path d="M4.2 11 L7.5 7.6 L10.8 11" fill="none" stroke="#505050" stroke-width="1.8"/><path d="M4.2 350.5 L7.5 353.9 L10.8 350.5" fill="none" stroke="#505050" stroke-width="1.8"/></svg>
<div class="a" style="left:61px;top:410px;width:923px;height:29px;background:#f0f0f0"></div>
<svg class="a" style="left:410px;top:412px" width="230" height="26"><path d="M13 7 L9 12 L13 17 M18.5 7 L14.5 12 L18.5 17" fill="none" stroke="#b4b4b4" stroke-width="1.3"/><path d="M45.5 7 L41.5 12 L45.5 17" fill="none" stroke="#b4b4b4" stroke-width="1.3"/><path d="M178.2 6.8 L183 12 L178.2 17.2" fill="none" stroke="#404040" stroke-width="1.7"/><path d="M204.8 6.8 L209.6 12 L204.8 17.2 M210.6 6.8 L215.4 12 L210.6 17.2" fill="none" stroke="#404040" stroke-width="1.7"/></svg>
<div class="t" style="top:420px;font-size:11.5px;color:#777;letter-spacing:-0.1px;left:480px;">Страница <span style="color:#333">1</span> из <span style="color:#333">2</span></div>
<svg class="a" style="left:510px;top:440px" width="24" height="7"><circle cx="6" cy="3.2" r="1.5" fill="#555"/><circle cx="12" cy="3.2" r="1.5" fill="#555"/><circle cx="18" cy="3.2" r="1.5" fill="#555"/></svg>
<div class="a" style="left:60px;top:447px;width:925px;height:267px;border:1px solid #a3a3a3;background:#fff"></div>
<svg class="a" style="left:0;top:0;font-family:'Liberation Sans',sans-serif" width="1280" height="720"><path d="M131.5 628.5 H730" stroke="#e2e2e2" stroke-width="1"/><path d="M131.5 588.5 H730" stroke="#e2e2e2" stroke-width="1"/><path d="M131.5 547.5 H730" stroke="#e2e2e2" stroke-width="1"/><path d="M131.5 506.5 H730" stroke="#e2e2e2" stroke-width="1"/><path d="M131.5 465.5 H730" stroke="#e2e2e2" stroke-width="1"/><path d="M225.5 465 V669.3" stroke="#e2e2e2" stroke-width="1"/><path d="M225.5 669.3 V673.3" stroke="#bdbdbd" stroke-width="1"/><path d="M318.5 465 V669.3" stroke="#e2e2e2" stroke-width="1"/><path d="M318.5 669.3 V673.3" stroke="#bdbdbd" stroke-width="1"/><path d="M412.5 465 V669.3" stroke="#e2e2e2" stroke-width="1"/><path d="M412.5 669.3 V673.3" stroke="#bdbdbd" stroke-width="1"/><path d="M505.5 465 V669.3" stroke="#e2e2e2" stroke-width="1"/><path d="M505.5 669.3 V673.3" stroke="#bdbdbd" stroke-width="1"/><path d="M599.5 465 V669.3" stroke="#e2e2e2" stroke-width="1"/><path d="M599.5 669.3 V673.3" stroke="#bdbdbd" stroke-width="1"/><path d="M693.5 465 V669.3" stroke="#e2e2e2" stroke-width="1"/><path d="M693.5 669.3 V673.3" stroke="#bdbdbd" stroke-width="1"/><path d="M131.5 465 V669.3 H730" fill="none" stroke="#8c8c8c" stroke-width="1"/><path d="M131.5 669.3 V673.3" stroke="#bdbdbd" stroke-width="1"/><path d="M127 669.5 H131.5" stroke="#bdbdbd" stroke-width="1"/><text x="124" y="673.8" text-anchor="end" font-size="12.5" fill="#3a3a3a" letter-spacing="-0.3">0</text><path d="M127 628.5 H131.5" stroke="#bdbdbd" stroke-width="1"/><text x="124" y="632.8" text-anchor="end" font-size="12.5" fill="#3a3a3a" letter-spacing="-0.3">20</text><path d="M127 588.5 H131.5" stroke="#bdbdbd" stroke-width="1"/><text x="124" y="592.8" text-anchor="end" font-size="12.5" fill="#3a3a3a" letter-spacing="-0.3">40</text><path d="M127 547.5 H131.5" stroke="#bdbdbd" stroke-width="1"/><text x="124" y="551.8" text-anchor="end" font-size="12.5" fill="#3a3a3a" letter-spacing="-0.3">60</text><path d="M127 506.5 H131.5" stroke="#bdbdbd" stroke-width="1"/><text x="124" y="510.8" text-anchor="end" font-size="12.5" fill="#3a3a3a" letter-spacing="-0.3">80</text><path d="M127 465.5 H131.5" stroke="#bdbdbd" stroke-width="1"/><text x="124" y="469.8" text-anchor="end" font-size="12.5" fill="#3a3a3a" letter-spacing="-0.3">100</text><path d="M150.2 476.7 L168.9 508.5 L187.7 522.4 L206.4 505.7 L225.1 523.6 L243.8 498.1 L262.5 540.6 L281.3 526.5 L300.0 491.8 L318.7 490.4 L337.4 527.9 L356.1 542.8 L374.9 514.3 L393.6 512.2 L412.3 519.8 L431.0 526.5 L449.7 524.9 L468.5 482.2 L487.2 562.0 L505.9 522.0 L524.6 512.0 L543.3 531.2 L562.1 487.5 L580.8 512.8 L599.5 500.2 L618.2 512.4 L636.9 494.5 L655.7 558.7 L674.4 508.3 L693.1 518.5 L711.8 621.8" fill="none" stroke="#74c47a" stroke-width="2" stroke-linejoin="miter" stroke-miterlimit="3"/><path d="M150.2 465.3 L168.9 499.2 L187.7 489.2 L206.4 478.8 L225.1 484.9 L243.8 478.6 L262.5 495.5 L281.3 486.5 L300.0 475.7 L318.7 484.1 L337.4 489.4 L356.1 513.6 L374.9 481.6 L393.6 474.5 L412.3 512.8 L431.0 499.4 L449.7 473.9 L468.5 482.2 L487.2 529.8 L505.9 487.9 L524.6 482.8 L543.3 504.9 L562.1 474.1 L580.8 493.9 L599.5 476.9 L618.2 496.7 L636.9 476.9 L655.7 499.4 L674.4 497.5 L693.1 478.6 L711.8 506.1" fill="none" stroke="#3fa9a5" stroke-width="2" stroke-linejoin="miter" stroke-miterlimit="3"/><text x="187.7" y="685" text-anchor="middle" font-size="11" fill="#3a3a3a" letter-spacing="-0.25">03.08.2025</text><text x="243.8" y="699" text-anchor="middle" font-size="11" fill="#3a3a3a" letter-spacing="-0.25">06.08.2025</text><text x="300.0" y="685" text-anchor="middle" font-size="11" fill="#3a3a3a" letter-spacing="-0.25">09.08.2025</text><text x="356.1" y="699" text-anchor="middle" font-size="11" fill="#3a3a3a" letter-spacing="-0.25">12.08.2025</text><text x="412.3" y="685" text-anchor="middle" font-size="11" fill="#3a3a3a" letter-spacing="-0.25">15.08.2025</text><text x="468.5" y="699" text-anchor="middle" font-size="11" fill="#3a3a3a" letter-spacing="-0.25">18.08.2025</text><text x="524.6" y="685" text-anchor="middle" font-size="11" fill="#3a3a3a" letter-spacing="-0.25">21.08.2025</text><text x="580.8" y="699" text-anchor="middle" font-size="11" fill="#3a3a3a" letter-spacing="-0.25">24.08.2025</text><text x="636.9" y="685" text-anchor="middle" font-size="11" fill="#3a3a3a" letter-spacing="-0.25">27.08.2025</text><text x="693.1" y="699" text-anchor="middle" font-size="11" fill="#3a3a3a" letter-spacing="-0.25">30.08.2025</text><rect x="766.5" y="461.5" width="23" height="9.5" fill="#4cb3ae" stroke="#333" stroke-width="1"/><rect x="766.5" y="475.5" width="23" height="9.5" fill="#80ca80" stroke="#333" stroke-width="1"/><text x="794" y="470" font-size="11" fill="#3a3a3a" letter-spacing="-0.05">% подтвержденных приемов</text><text x="794" y="484" font-size="11" fill="#3a3a3a" letter-spacing="-0.05">% завершенных приемов</text></svg>
<div class="a" style="left:991px;top:46px;width:283px;height:169px;border:1px solid #a9a9a9;background:#fff"></div>
<div class="a" style="left:992px;top:47px;width:281px;height:27px;background:#e9e9e9"></div>
<svg class="a" style="left:998px;top:57px" width="14" height="10"><path d="M2.2 1.6 H12.2 L7.2 8.4 Z" fill="none" stroke="#555" stroke-width="1"/></svg>
<div class="t" style="top:55px;font-size:13px;color:#000;letter-spacing:0.1px;left:1022px;">Период</div>
<svg class="a" style="left:996px;top:79.0px" width="17" height="17"><circle cx="8.5" cy="8.5" r="6.2" fill="#fff" stroke="#555" stroke-width="1"/></svg>
<div class="t" style="top:82px;font-size:11.7px;color:#000;letter-spacing:0.1px;left:1017px;">День</div>
<svg class="a" style="left:996px;top:107.0px" width="17" height="17"><circle cx="8.5" cy="8.5" r="6.2" fill="#fff" stroke="#555" stroke-width="1"/><circle cx="8.5" cy="8.5" r="3.6" fill="#111"/></svg>
<div class="t" style="top:110px;font-size:11.7px;color:#000;letter-spacing:0.1px;left:1017px;">Месяц</div>
<svg class="a" style="left:996px;top:135.0px" width="17" height="17"><circle cx="8.5" cy="8.5" r="6.2" fill="#fff" stroke="#555" stroke-width="1"/></svg>
<div class="t" style="top:138px;font-size:11.7px;color:#000;letter-spacing:0.1px;left:1017px;">Год</div>
<svg class="a" style="left:996px;top:163.0px" width="17" height="17"><circle cx="8.5" cy="8.5" r="6.2" fill="#fff" stroke="#555" stroke-width="1"/></svg>
<div class="t" style="top:166px;font-size:11.7px;color:#000;letter-spacing:0.1px;left:1017px;">Весь период</div>
<svg class="a" style="left:996px;top:191.0px" width="17" height="17"><circle cx="8.5" cy="8.5" r="6.2" fill="#fff" stroke="#555" stroke-width="1"/></svg>
<div class="t" style="top:194px;font-size:11.7px;color:#000;letter-spacing:0.1px;left:1017px;">Выборочный</div>
<div class="a" style="left:1100px;top:105px;width:170px;height:20px;border:1px solid #acacac;background:#fff"></div>
<div class="t" style="top:109px;font-size:11.7px;color:#000;left:1111px;">Август</div>
<div class="t" style="top:109px;font-size:11.7px;color:#000;letter-spacing:-0.55px;left:1156px;">2025</div>
<svg class="a" style="left:1251px;top:107px" width="17" height="16"><rect x="1.5" y="1.5" width="14" height="6" fill="#e6e6e6" stroke="#c4c4c4" stroke-width="1"/><rect x="1.5" y="8.5" width="14" height="6" fill="#e6e6e6" stroke="#c4c4c4" stroke-width="1"/><path d="M5.5 6 L8.5 3 L11.5 6 Z M5.5 10 L8.5 13 L11.5 10 Z" fill="#111"/></svg>
<div class="a" style="left:991px;top:221px;width:283px;height:83px;border:1px solid #a9a9a9;background:#fff"></div>
<div class="a" style="left:992px;top:222px;width:281px;height:27px;background:#e9e9e9"></div>
<svg class="a" style="left:998px;top:232px" width="14" height="10"><path d="M2.2 1.6 H12.2 L7.2 8.4 Z" fill="none" stroke="#555" stroke-width="1"/></svg>
<div class="t" style="top:231px;font-size:13px;color:#000;letter-spacing:0.1px;left:1022px;">Итоги по уровням</div>
<div class="t" style="top:257px;font-size:11.7px;color:#000;letter-spacing:0.05px;left:998.5px;">Первый</div>
<div class="a" style="left:1100px;top:252px;width:170px;height:21px;border:1px solid #acacac;border-radius:2px;background:#fff"></div>
<div class="a" style="left:1249px;top:253px;width:20px;height:19px;background:#dcdcdc;border-left:1px solid #bdbdbd;border-radius:0 1px 1px 0"></div>
<svg class="a" style="left:1250px;top:253px" width="19" height="19"><path d="M5.6 8 L9.5 11.6 L13.4 8" fill="none" stroke="#555" stroke-width="1.4"/></svg>
<div class="t" style="top:258px;font-size:11.8px;color:#000;left:1107px;">День</div>
<div class="t" style="top:284px;font-size:11.7px;color:#000;letter-spacing:0.05px;left:998.5px;">Второй</div>
<div class="a" style="left:1100px;top:279px;width:170px;height:21px;border:1px solid #acacac;border-radius:2px;background:#fff"></div>
<div class="a" style="left:1249px;top:280px;width:20px;height:19px;background:#dcdcdc;border-left:1px solid #bdbdbd;border-radius:0 1px 1px 0"></div>
<svg class="a" style="left:1250px;top:280px" width="19" height="19"><path d="M5.6 8 L9.5 11.6 L13.4 8" fill="none" stroke="#555" stroke-width="1.4"/></svg>
<div class="t" style="top:285px;font-size:11.8px;color:#000;left:1107px;">Нет</div>
<div class="a" style="left:991px;top:310px;width:283px;height:56px;border:1px solid #a9a9a9;background:#fff"></div>
<div class="a" style="left:992px;top:311px;width:281px;height:27px;background:#e9e9e9"></div>
<svg class="a" style="left:998px;top:321px" width="14" height="10"><path d="M2.2 1.6 H12.2 L7.2 8.4 Z" fill="none" stroke="#555" stroke-width="1"/></svg>
<div class="t" style="top:319px;font-size:13px;color:#000;letter-spacing:0.1px;left:1022px;">Вид отчета</div>
<div class="t" style="top:346px;font-size:11.7px;color:#000;letter-spacing:0.05px;left:998.5px;">Показать</div>
<div class="a" style="left:1100px;top:341px;width:170px;height:21px;border:1px solid #858585;border-radius:2px;background:#fff"></div>
<div class="a" style="left:1249px;top:342px;width:20px;height:19px;background:#a5a5a5;border-left:1px solid #8a8a8a;border-radius:0 1px 1px 0"></div>
<svg class="a" style="left:1250px;top:342px" width="19" height="19"><path d="M5.6 8 L9.5 11.6 L13.4 8" fill="none" stroke="#5a5a5a" stroke-width="1.4"/></svg>
<div class="t" style="top:347px;font-size:11.8px;color:#000;left:1107px;">Приемы</div>
<svg class="a" style="left:1236px;top:346px" width="12" height="12"><path d="M2.5 2.5 L8.5 8.5 M8.5 2.5 L2.5 8.5" stroke="#555" stroke-width="1.7"/></svg>
<div class="a" style="left:991px;top:372px;width:283px;height:164px;border:1px solid #a9a9a9;background:#fff"></div>
<div class="a" style="left:992px;top:373px;width:281px;height:27px;background:#e9e9e9"></div>
<svg class="a" style="left:998px;top:383px" width="14" height="10"><path d="M2.2 1.6 H12.2 L7.2 8.4 Z" fill="none" stroke="#555" stroke-width="1"/></svg>
<div class="t" style="top:381px;font-size:13px;color:#000;letter-spacing:0.1px;left:1022px;">Прочее</div>
<div class="t" style="top:408px;font-size:11.7px;color:#000;letter-spacing:0.05px;left:998.5px;">Куратор</div>
<div class="t" style="top:435px;font-size:11.7px;color:#000;letter-spacing:0.05px;left:998.5px;">Врач</div>
<div class="a" style="left:1100px;top:403px;width:170px;height:21px;border:1px solid #acacac;border-radius:2px;background:#fff"></div>
<div class="a" style="left:1249px;top:404px;width:20px;height:19px;background:#dcdcdc;border-left:1px solid #bdbdbd;border-radius:0 1px 1px 0"></div>
<svg class="a" style="left:1250px;top:404px" width="19" height="19"><path d="M5.6 8 L9.5 11.6 L13.4 8" fill="none" stroke="#555" stroke-width="1.4"/></svg>
<div class="t" style="top:409px;font-size:11.8px;color:#000;left:1107px;font-style:italic;">< Не выбрано ></div>
<div class="a" style="left:1100px;top:430px;width:170px;height:21px;border:1px solid #acacac;border-radius:2px;background:#fff"></div>
<div class="a" style="left:1249px;top:431px;width:20px;height:19px;background:#dcdcdc;border-left:1px solid #bdbdbd;border-radius:0 1px 1px 0"></div>
<svg class="a" style="left:1250px;top:431px" width="19" height="19"><path d="M5.6 8 L9.5 11.6 L13.4 8" fill="none" stroke="#555" stroke-width="1.4"/></svg>
<div class="t" style="top:436px;font-size:11.8px;color:#000;left:1107px;font-style:italic;">< Не выбрано ></div>
<div class="t" style="top:462px;font-size:11.7px;color:#000;letter-spacing:0.05px;left:998.5px;">Подтвердил</div>
<div class="a" style="left:1100px;top:457px;width:170px;height:21px;border:1px solid #acacac;border-radius:2px;background:#fff"></div>
<div class="a" style="left:1249px;top:458px;width:20px;height:19px;background:#dcdcdc;border-left:1px solid #bdbdbd;border-radius:0 1px 1px 0"></div>
<svg class="a" style="left:1250px;top:458px" width="19" height="19"><path d="M5.6 8 L9.5 11.6 L13.4 8" fill="none" stroke="#555" stroke-width="1.4"/></svg>
<div class="t" style="top:463px;font-size:11.8px;color:#000;left:1107px;font-style:italic;">< Не выбрано ></div>
<div class="t" style="top:489px;font-size:11.7px;color:#000;letter-spacing:0.05px;left:998.5px;">Стадия</div>
<div class="a" style="left:1100px;top:484px;width:170px;height:21px;border:1px solid #acacac;border-radius:2px;background:#fff"></div>
<div class="a" style="left:1249px;top:485px;width:20px;height:19px;background:#dcdcdc;border-left:1px solid #bdbdbd;border-radius:0 1px 1px 0"></div>
<svg class="a" style="left:1250px;top:485px" width="19" height="19"><path d="M5.6 8 L9.5 11.6 L13.4 8" fill="none" stroke="#555" stroke-width="1.4"/></svg>
<div class="t" style="top:490px;font-size:11.8px;color:#000;left:1107px;font-style:italic;">< Не выбрано ></div>
<div class="t" style="top:516px;font-size:11.7px;color:#000;letter-spacing:0.05px;left:998.5px;">Статус пациента</div>
<div class="a" style="left:1100px;top:511px;width:170px;height:21px;border:1px solid #acacac;border-radius:2px;background:#fff"></div>
<div class="a" style="left:1249px;top:512px;width:20px;height:19px;background:#dcdcdc;border-left:1px solid #bdbdbd;border-radius:0 1px 1px 0"></div>
<svg class="a" style="left:1250px;top:512px" width="19" height="19"><path d="M5.6 8 L9.5 11.6 L13.4 8" fill="none" stroke="#555" stroke-width="1.4"/></svg>
<div class="t" style="top:517px;font-size:11.8px;color:#000;left:1107px;font-style:italic;">< Не выбрано ></div>
<div class="a" style="left:991px;top:542px;width:283px;height:56px;border:1px solid #a9a9a9;background:#fff"></div>
<div class="a" style="left:992px;top:543px;width:281px;height:27px;background:#e9e9e9"></div>
<svg class="a" style="left:998px;top:553px" width="14" height="10"><path d="M2.2 1.6 H12.2 L7.2 8.4 Z" fill="none" stroke="#555" stroke-width="1"/></svg>
<div class="t" style="top:551px;font-size:13px;color:#000;letter-spacing:0.1px;left:1022px;">Маркетинг</div>
<div class="t" style="top:578px;font-size:11.7px;color:#000;letter-spacing:0.05px;left:998.5px;">Показ. рекоменд.</div>
<div class="a" style="left:1100px;top:574px;width:170px;height:21px;border:1px solid #acacac;border-radius:2px;background:#fff"></div>
<div class="a" style="left:1249px;top:575px;width:20px;height:19px;background:#dcdcdc;border-left:1px solid #bdbdbd;border-radius:0 1px 1px 0"></div>
<svg class="a" style="left:1250px;top:575px" width="19" height="19"><path d="M5.6 8 L9.5 11.6 L13.4 8" fill="none" stroke="#555" stroke-width="1.4"/></svg>
<div class="t" style="top:580px;font-size:11.8px;color:#000;left:1107px;font-style:italic;">< Не выбрано ></div>
<div class="a" style="left:1056px;top:359px;width:224px;height:92px;border:4px solid #abd01e;border-radius:3px 0 0 3px;background:#fff"></div>
<div class="a" style="left:1060px;top:383px;width:216px;height:1px;background:#abd01e"></div>
<svg class="a" style="left:1064px;top:366px" width="14" height="14"><rect x="0.5" y="0.5" width="12.5" height="12.5" fill="#fff" stroke="#b4b4b4" stroke-width="1"/><rect x="3" y="3" width="7.5" height="7.5" fill="#555"/></svg>
<div class="t" style="top:368px;font-size:11.5px;color:#000;letter-spacing:0.1px;left:1081.5px;">&lt; Все &gt;</div>
<svg class="a" style="left:1062px;top:391px" width="13" height="11"><path d="M1.5 1.8 H11.5 L6.5 8.8 Z" fill="none" stroke="#555" stroke-width="1"/></svg>
<svg class="a" style="left:1079px;top:388px" width="14" height="14"><rect x="0.5" y="0.5" width="12.5" height="12.5" fill="#fff" stroke="#b4b4b4" stroke-width="1"/><path d="M3.2 6.8 L5.6 9.2 L10.2 4" fill="none" stroke="#444" stroke-width="1.5"/></svg>
<div class="t" style="top:388px;font-size:11.7px;color:#000;letter-spacing:0.35px;left:1097.5px;">Приемы</div>
<svg class="a" style="left:1097px;top:409px" width="14" height="14"><rect x="0.5" y="0.5" width="12.5" height="12.5" fill="#fff" stroke="#b4b4b4" stroke-width="1"/><path d="M3.2 6.8 L5.6 9.2 L10.2 4" fill="none" stroke="#444" stroke-width="1.5"/></svg>
<div class="t" style="top:410px;font-size:11.7px;color:#000;letter-spacing:0.05px;left:1115px;">Не требуется подтверждение</div>
<svg class="a" style="left:1065px;top:430px" width="10" height="12"><path d="M1.8 1 L8.5 6 L1.8 11 Z" fill="#555"/></svg>
<svg class="a" style="left:1079px;top:430px" width="14" height="14"><rect x="0.5" y="0.5" width="12.5" height="12.5" fill="#fff" stroke="#b4b4b4" stroke-width="1"/></svg>
<div class="t" style="top:430px;font-size:11.7px;color:#000;letter-spacing:0.07px;left:1097px;">Требуется подтверждение</div>
<div class="a" style="left:1071px;top:676px;width:41px;height:40px;background:#abd01e;border-radius:3px"></div>
<div class="a" style="left:1075px;top:680px;width:33px;height:32px;background:#dedede;border:1px solid #a8a8a8;border-radius:2px"></div>
<svg class="a" style="left:1075px;top:680px" width="33" height="32"><path d="M9 9.8 H24 L18.2 16.5 V24 L15.6 22.4 V16.5 Z" fill="#555"/><path d="M19.5 24.6 H23 V22 L27 25.8 L23 29.6 V27 H19.5 Z" fill="#555"/></svg>
<div class="a" style="left:1116px;top:680px;width:33px;height:33px;background:#dedede;border:1px solid #a8a8a8;border-radius:2px"></div>
<svg class="a" style="left:1116px;top:680px" width="33" height="33"><path d="M9 9.8 H24 L18.2 16.5 V24 L15.6 22.4 V16.5 Z" fill="#555"/><path d="M20.5 21.5 L26 27 M26 21.5 L20.5 27" stroke="#555" stroke-width="1.8"/></svg>
<div class="a" style="left:1157px;top:680px;width:33px;height:33px;background:#dedede;border:1px solid #a8a8a8;border-radius:2px"></div>
<svg class="a" style="left:1157px;top:680px" width="33" height="33"><path d="M9.5 9 H15.2 L16.8 12.6 L18.4 9 H24 L19.6 16.5 L24.4 24 H18.6 L16.8 20.3 L15 24 H9.2 L14 16.5 Z" fill="#555"/></svg>
</body></html>
